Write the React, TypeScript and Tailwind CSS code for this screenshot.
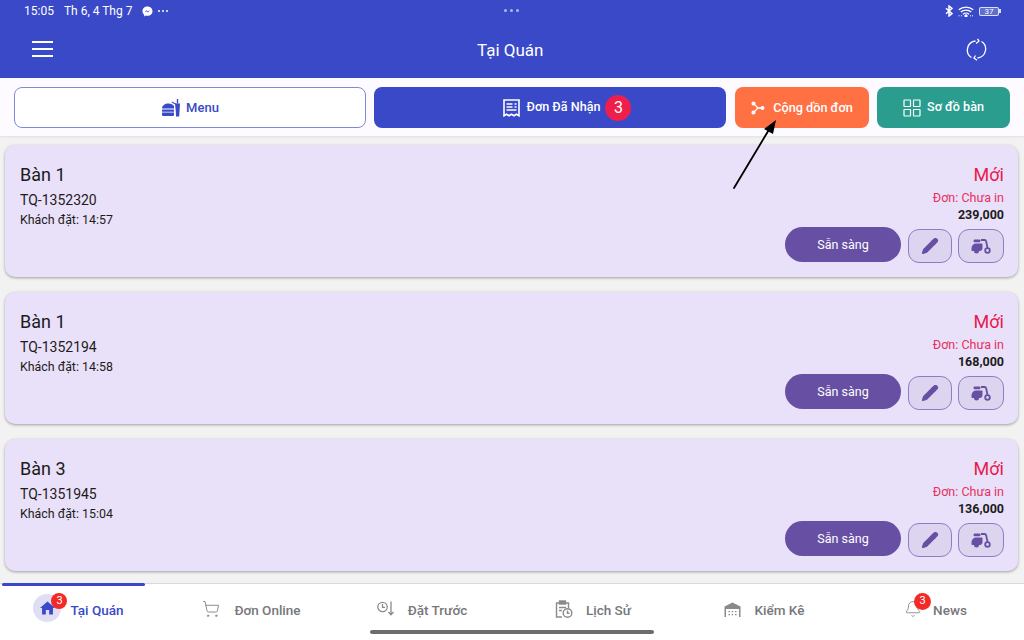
import React from "react";
import { Pencil, ShoppingCart, Bell } from "lucide-react";

const Burger = () => (
  <svg width="20" height="20" viewBox="0 0 20 20" fill="#3949c8">
    <path d="M1 10.500C1 7.500 4 5.500 7.500 5.500c2.500 0 4.500 1 5.500 2.500v2.500H1z" />
    <rect x="1" y="11.500" width="12" height="2.200" rx=".5" />
    <path d="M1 14.500h12v2c0 1-.6 1.500-1.500 1.500h-9C1.600 18 1 17.500 1 16.500z" />
    <path d="M14 5.500h5l-.8 13h-3.200l-.2-5z" />
    <path d="M15.800 5.500V1h1.400v4.500z" />
    <path d="M11 3.500l4.800 2.500-.5 1L10.500 4.500z" />
  </svg>
);

const Receipt = () => (
  <svg width="17" height="18" viewBox="0 0 17 18" fill="none" stroke="white" strokeWidth="1.600">
    <path d="M1 1h15v15.800l-2.500-1.500-2.500 1.500-2.500-1.500-2.500 1.500-2.500-1.500L1 16.800z" />
    <path d="M3.500 5h6M11.500 5h2M3.500 8h6M11.500 8h2M3.500 11h10" strokeWidth="1.300" />
  </svg>
);

const Merge = () => (
  <svg width="14" height="14" viewBox="0 0 14 14" fill="white" stroke="white" strokeWidth="1.300">
    <path d="M2.500 2.500L7 7l-4.500 4.500M7 7h4.500" fill="none" />
    <circle cx="2.500" cy="2.500" r="1.400" />
    <circle cx="2.500" cy="11.500" r="1.400" />
    <circle cx="11.500" cy="7" r="1.400" />
  </svg>
);

const Grid = () => (
  <svg width="18" height="18" viewBox="0 0 18 18" fill="none" stroke="white" strokeWidth="1.200">
    <rect x="1" y="1" width="6.500" height="6.500" rx=".5" />
    <rect x="10.500" y="1" width="6.500" height="6.500" rx=".5" />
    <rect x="1" y="10.500" width="6.500" height="6.500" rx=".5" />
    <rect x="10.500" y="10.500" width="6.500" height="6.500" rx=".5" />
  </svg>
);

const Scooter = () => (
  <svg width="20" height="15" viewBox="0 0 20 15" fill="#6750a4">
    <rect x="2.500" y="0.500" width="7" height="2.800" rx="1.200" />
    <path d="M0.500 9.500C0.500 6.500 2.500 4.500 5 4.500h5.500c.6 0 1 .4 1 1v3.500c0 1.500-1 3-2.500 3H1.500c-.6 0-1-.4-1-1z" />
    <circle cx="5.500" cy="12" r="2.500" />
    <path d="M10 1h3.500c1 0 1.500.6 1.700 1.500L16.500 9" fill="none" stroke="#6750a4" strokeWidth="1.800" />
    <circle cx="16.500" cy="11.500" r="2.300" fill="none" stroke="#6750a4" strokeWidth="1.800" />
  </svg>
);

const Clock = () => (
  <svg width="18" height="15" viewBox="0 0 18 15" fill="none" stroke="#8a8a8e" strokeWidth="1.300">
    <circle cx="5.500" cy="6" r="4.700" />
    <path d="M5.500 3v3.300h2.500" />
    <path d="M14 .5v13M11.500 11l2.500 2.700 2.500-2.700" />
  </svg>
);

const History = () => (
  <svg width="18" height="19" viewBox="0 0 18 19" fill="none" stroke="#8a8a8e" strokeWidth="1.400">
    <path d="M7 17H1.500V3h12v5" />
    <rect x="4.500" y="1" width="6" height="3" fill="#8a8a8e" />
    <path d="M4 7.500h7M4 10.500h3" />
    <circle cx="12.500" cy="13" r="4.300" />
    <path d="M12.500 10.500v2.700h2" />
  </svg>
);

const Warehouse = () => (
  <svg width="17" height="15" viewBox="0 0 17 15" fill="#8a8a8e">
    <path d="M.5 4.500L8.500.5l8 4V15H15V7H2v8H.5z" />
    <path d="M2 4.500h13V6H2z" />
    <path d="M4.500 9H6v1.200H4.500zM7.700 9h1.500v1.200H7.700zM11 9h1.500v1.200H11zM4.500 12H6v1.200H4.500zM7.700 12h1.500v1.200H7.700zM11 12h1.500v1.200H11z" />
  </svg>
);

const orders = [
  { table: "Bàn 1", code: "TQ-1352320", time: "14:57", total: "239,000" },
  { table: "Bàn 1", code: "TQ-1352194", time: "14:58", total: "168,000" },
  { table: "Bàn 3", code: "TQ-1351945", time: "15:04", total: "136,000" },
];

function OrderCard({ o }: { o: (typeof orders)[number] }) {
  return (
    <div className="h-[132px] rounded-[10px] bg-[#e9e1f9] shadow-[0_1px_3px_rgba(0,0,0,0.35)] pl-[15px] pr-[14px] flex justify-between">
      <div className="pt-[18px] text-[#1d1b20]">
        <div className="text-[18px] leading-[24px]">{o.table}</div>
        <div className="text-[14px] leading-[20px] mt-[3px]">{o.code}</div>
        <div className="text-[12.400px] leading-[18px] mt-[1px]">Khách đặt: {o.time}</div>
      </div>
      <div className="flex flex-col items-end pt-[18px]">
        <div className="text-[18px] leading-[24px] text-[#e8194b]">Mới</div>
        <div className="text-[12.500px] leading-[16px] text-[#e8305c] mt-[3px]">Đơn: Chưa in</div>
        <div className="text-[12.500px] leading-[16px] font-bold text-[#1d1b20] mt-[1px]">{o.total}</div>
        <div className="flex items-start mt-[4px]">
          <div className="w-[116px] h-[35px] pt-[1px] rounded-full bg-[#6750a4] text-white text-[12.500px] flex items-center justify-center">Sẵn sàng</div>
          <div className="ml-[7px] mt-[2px] w-[44px] h-[34px] rounded-[11px] bg-[#ddd5f0] border border-[#8f7cc4] flex items-center justify-center">
            <Pencil size={18} fill="#6750a4" stroke="#6750a4" strokeWidth={1.500} />
          </div>
          <div className="ml-[6px] mt-[2px] w-[46px] h-[34px] rounded-[11px] bg-[#ddd5f0] border border-[#8f7cc4] flex items-center justify-center">
            <Scooter />
          </div>
        </div>
      </div>
    </div>
  );
}

function NavItem({ icon, label, active, width, gap }: { icon: React.ReactNode; label: string; active?: boolean; width: string; gap: string }) {
  return (
    <div className={`${width} ${gap} shrink-0 flex items-center justify-center text-[13.500px] font-medium ${active ? "text-[#3949c8]" : "text-[#77777c]"}`}>
      {icon}
      <span>{label}</span>
    </div>
  );
}

export default function App() {
  return (
    <div className="relative w-[1024px] h-[640px] overflow-hidden bg-[#f2f2f2] font-['Roboto',sans-serif]">
      <header className="h-[78px] bg-[#3949c8] text-white px-[24px]">
        <div className="relative h-[22px] flex items-center justify-between text-[12px]">
          <div className="flex items-center">
            <span>15:05</span>
            <span className="ml-[10px]">Th 6, 4 Thg 7</span>
            <svg className="ml-[10px]" width="11" height="11" viewBox="0 0 11 11" fill="white">
              <path d="M5.500 0.500C2.500 0.500.500 2.600.500 5.200c0 1.400.6 2.600 1.600 3.400V10.500l1.700-1c.5.200 1.100.3 1.700.3 3 0 5-2.100 5-4.600S8.500.500 5.500.500z" />
              <path d="M2.500 6.500l2-2.200 1.300 1.200 2.200-1.200-2 2.200-1.300-1.200z" fill="#3949c8" />
            </svg>
            <span className="ml-[5px] flex gap-[2px]">
              <i className="w-[2px] h-[2px] rounded-full bg-white" />
              <i className="w-[2px] h-[2px] rounded-full bg-white" />
              <i className="w-[2px] h-[2px] rounded-full bg-white" />
            </span>
          </div>
          <div className="absolute left-[480px] top-[9px] flex gap-[3px]">
            <i className="w-[3px] h-[3px] rounded-full bg-white/60" />
            <i className="w-[3px] h-[3px] rounded-full bg-white/60" />
            <i className="w-[3px] h-[3px] rounded-full bg-white/60" />
          </div>
          <div className="flex items-center gap-[5px]">
            <svg width="8" height="12" viewBox="0 0 8 12" fill="none" stroke="white" strokeWidth="1.500">
              <path d="M1 3.200l6 5.400L4 11V1l3 2.400L1 8.800" />
            </svg>
            <svg width="16" height="11" viewBox="0 0 16 11" fill="none" stroke="white" strokeWidth="1.300">
              <path d="M.8 3.800c4-3.600 10.400-3.600 14.400 0M2.800 6c2.800-2.500 7.600-2.500 10.400 0M5 8.200c1.600-1.400 4.400-1.400 6 0" />
              <path d="M.5 9.800h1.500M14 9.800h1.500M3 9.800h1M12 9.800h1" strokeWidth="1" strokeDasharray="1 1" />
              <circle cx="8" cy="9.800" r="1" fill="white" />
            </svg>
            <div className="relative w-[20px] h-[9px] rounded-[2px] border border-white/80 bg-white/20 text-[8px] leading-[7px] text-center mr-[1px]">
              37
              <i className="absolute right-[-3px] top-[1px] w-[2px] h-[4px] bg-white/80" />
            </div>
          </div>
        </div>
        <div className="relative h-[56px] flex items-center justify-between pl-[8px] pr-[13px]">
          <div className="flex flex-col gap-[5px] -mt-[2px]">
            <i className="block w-[21px] h-[2px] bg-white" />
            <i className="block w-[21px] h-[2px] bg-white" />
            <i className="block w-[21px] h-[2px] bg-white" />
          </div>
          <span className="absolute left-[453px] top-[16px] text-[17px] leading-[24px]">Tại Quán</span>
          <svg className="-mt-[2px]" width="21" height="23" viewBox="0 0 21 23" fill="none" stroke="white" strokeWidth="1.300">
            <path d="M5.500 19.500A9 9 0 0 1 9.500 3M15.500 3.500A9 9 0 0 1 11.500 20" />
            <path d="M11.500 .8L13 3.200 10 5.500M9.500 17.500L8 20l3 2.200" />
          </svg>
        </div>
      </header>

      <div className="h-[58px] bg-[#fdfbff] flex items-center gap-[8px] pl-[14px] pt-[1px] shadow-[0_1px_2px_rgba(0,0,0,0.08)]">
        <div className="w-[352px] h-[41px] rounded-[8px] border border-[#7f89dc] bg-white text-[#3949c8] flex items-center justify-center gap-[5px] text-[13px] font-medium">
          <Burger /> Menu
        </div>
        <div className="w-[352px] h-[41px] rounded-[8px] bg-[#3949c8] text-white flex items-center justify-center gap-[7px] text-[12.600px] font-medium pl-[34px]">
          <Receipt /> Đơn Đã Nhận
          <span className="w-[26px] h-[26px] rounded-full bg-[#ee1f4b] flex items-center justify-center text-[16px] font-normal -ml-[2px]">3</span>
        </div>
        <div className="ml-[1px] w-[134px] h-[41px] rounded-[8px] bg-[#ff7043] text-white flex items-center justify-center gap-[8px] text-[12.700px] font-medium">
          <Merge /> Cộng dồn đơn
        </div>
        <div className="w-[133px] h-[41px] rounded-[8px] bg-[#2a9d8f] text-white flex items-center justify-center gap-[6px] text-[12.600px] font-medium">
          <Grid /> Sơ đồ bàn
        </div>
      </div>

      <main className="pl-[5px] pr-[6px] pt-[9px] flex flex-col gap-[15px] h-[447px]">
        {orders.map((o) => (
          <OrderCard key={o.code} o={o} />
        ))}
      </main>

      <nav className="relative h-[57px] bg-white border-t border-[#d9d9d9] flex items-start pt-[16px]">
        <i className="absolute left-[2px] top-[-1px] w-[143px] h-[3px] rounded-full bg-[#3949c8]" />
        <NavItem
          width="w-[157px]"
          gap="gap-[9px]"
          active
          label="Tại Quán"
          icon={
            <span className="relative w-[28px] h-[28px] -mt-[6px] -mb-[2px] rounded-full bg-[#dfdef5] flex items-center justify-center">
              <svg width="15" height="14" viewBox="0 0 16 14" fill="#3949c8"><path d="M8 0L0 7h2.200v7h4V9h3.600v5h4V7H16z" /></svg>
              <span className="absolute top-[-1px] right-[-6px] w-[16px] h-[16px] rounded-full bg-[#f22b29] text-white text-[11px] font-normal flex items-center justify-center">3</span>
            </span>
          }
        />
        <NavItem width="w-[189px]" gap="gap-[14px]" label="Đơn Online" icon={<ShoppingCart size={18} strokeWidth={1.300} color="#8a8a8e" className="-mt-[3px]" />} />
        <NavItem width="w-[152px]" gap="gap-[13px]" label="Đặt Trước" icon={<span className="-mt-[3px]"><Clock /></span>} />
        <NavItem width="w-[190px]" gap="gap-[13px]" label="Lịch Sử" icon={<span className="-mt-[2px]"><History /></span>} />
        <NavItem width="w-[152px]" gap="gap-[14px]" label="Kiểm Kê" icon={<span className="-mt-[2px]"><Warehouse /></span>} />
        <NavItem
          width="w-[184px] pl-[7px]"
          gap="gap-[11px]"
          label="News"
          icon={
            <span className="relative -mt-[2px]">
              <Bell size={18} strokeWidth={1.200} color="#8a8a8e" />
              <span className="absolute top-[-7px] right-[-9px] w-[17px] h-[17px] rounded-full bg-[#f22b29] text-white text-[11px] font-normal flex items-center justify-center">3</span>
            </span>
          }
        />
        <i className="absolute left-[370px] top-[46px] w-[284px] h-[4px] rounded-full bg-[#6d6d6d]" />
      </nav>

      <svg className="absolute left-[730px] top-[114px]" width="50" height="78" viewBox="0 0 50 78" fill="none">
        <path d="M4 74L40 14" stroke="black" strokeWidth="1.800" strokeLinecap="round" />
        <path d="M46 6L34 15l9 5z" fill="black" />
      </svg>
    </div>
  );
}
